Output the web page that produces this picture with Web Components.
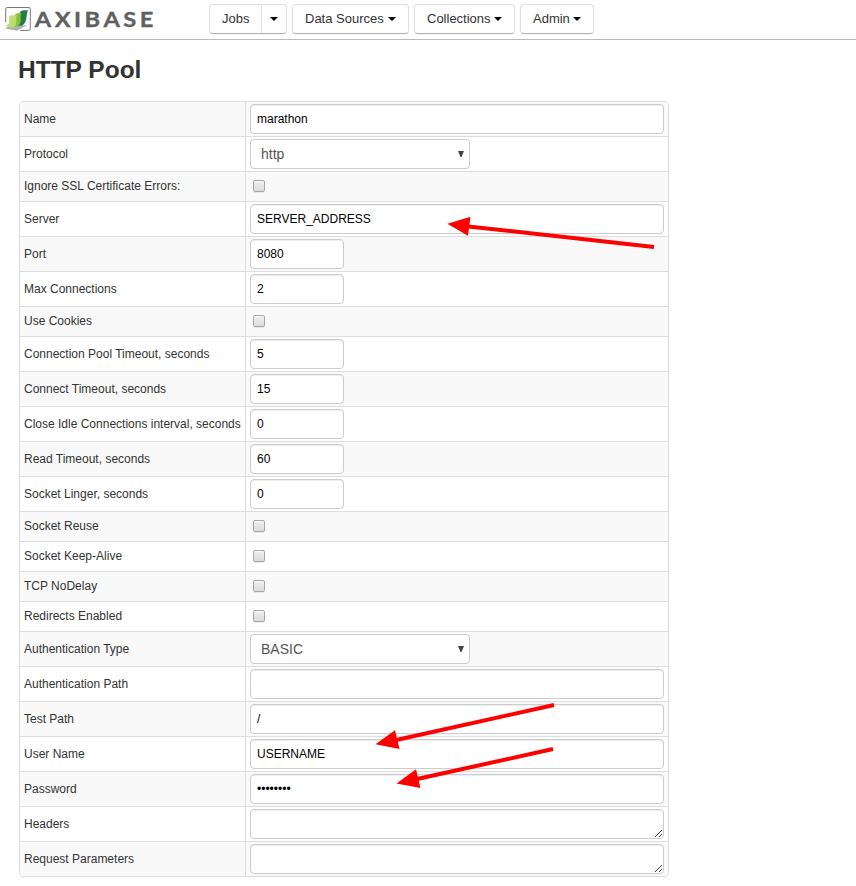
<!DOCTYPE html>
<html lang="en">
<head>
<meta charset="utf-8">
<title>HTTP Pool</title>
<style>
html,body{margin:0;padding:0;background:#fff}
body{font-family:"Liberation Sans",Arial,sans-serif;color:#333;font-size:12px;width:856px;height:886px;overflow:hidden}
</style>
</head>
<body>
<pool-page></pool-page>
<script>
function define(name, html, setup) {
  customElements.define(name, class extends HTMLElement {
    connectedCallback() {
      if (this.shadowRoot) return;
      const root = this.attachShadow({ mode: 'open' });
      const t = document.createElement('template');
      t.innerHTML = html;
      root.append(t.content.cloneNode(true));
      if (setup) setup(this, root);
    }
  });
}

define('brand-logo', `
<style>:host{display:block;width:160px;height:34px}svg{display:block}</style>
<svg width="160" height="34" viewBox="0 0 160 34">
  <path d="M20 30.400H28.500Q30.300 30.400 30.300 28.500V9Q30.300 7.500 28.800 7.500H7.200Q5.700 7.500 5.700 9V22" fill="none" stroke="#777" stroke-width="1"/>
  <path d="M5 28.500L9 26L27 25L17 30.800Z" fill="#b0b0b0"/>
  <path d="M14 25.500C20 22 17 15 21 11C23 9.500 26 10.500 28.300 10C25.500 14 28 20 23.500 24.500C21 26.500 17 26 14 25.500Z" fill="#1f7d45"/>
  <path d="M10 26C17 23 13 17 15.500 14C17.500 12.500 19 13.500 21.500 13C19 17 23 21.500 18.500 25.500C15 27.500 13 27 10 26Z" fill="#84c03c"/>
  <path d="M5.500 25.500C12 24 7.500 19 10 15.800C12.500 14.500 14.500 15.800 17 15.200C14.500 19 19 23 14 27C10 28 8 27 5.500 25.500Z" fill="#c1dc70"/>
  <text transform="translate(34.700 26.500) scale(1.110 1)" x="0" y="0" font-family="Lato" font-weight="700" font-size="21.300" fill="#606060" stroke="#606060" stroke-width=".35" textLength="107" lengthAdjust="spacing">AXIBASE</text>
</svg>`);

define('menu-button', `
<style>
:host{display:flex;box-sizing:border-box;height:30px;border:1px solid #e0e0e0;border-bottom-color:#b3b3b3;border-radius:4px;background:#fff;font-size:13px;line-height:28px;color:#333;box-shadow:0 1px 2px rgba(0,0,0,.05)}
.label{padding-left:12px;white-space:nowrap}
.caret{display:flex;align-items:center;margin-left:auto;padding-right:12px}
.caret i{display:block;border:4px solid transparent;border-top-color:#000;border-bottom:0}
:host([split]) .label{padding-right:12px;border-right:1px solid #e0e0e0}
:host([split]) .caret{margin-left:0;padding:0 0 0 8px}
</style>
<span class="label"><slot></slot></span><span class="caret"><i></i></span>`,
(el) => { el.style.width = el.getAttribute('width') + 'px'; });

define('nav-bar', `
<style>
:host{display:flex;box-sizing:border-box;height:40px;border-bottom:1px solid #bbb;align-items:flex-start}
brand-logo{margin-right:49px}
nav{display:flex;gap:5px;padding-top:4px}
</style>
<brand-logo></brand-logo>
<nav><menu-button split width="78">Jobs</menu-button><menu-button width="117">Data Sources</menu-button><menu-button width="101">Collections</menu-button><menu-button width="74">Admin</menu-button></nav>`);

define('text-field', `
<style>
:host{display:block;box-sizing:border-box;width:414px;height:30px;border:1px solid #ccc;border-radius:4px;background:#fff;box-shadow:inset 0 1px 1px rgba(0,0,0,.075);padding:0 6px;line-height:28px;color:#000;position:relative}
:host([small]){width:94px}
svg{display:none}
:host([area]) svg{display:block;position:absolute;right:-1px;bottom:0}
</style>
<slot></slot>
<svg width="10" height="10" viewBox="0 0 10 10" stroke="#444" stroke-width="1" shape-rendering="crispEdges"><path d="M1 8.500h1M2 7.500h1M3 6.500h1M4 5.500h1M5 4.500h1M6 3.500h1M7 2.500h1M5 8.500h1M6 7.500h1M7 6.500h1"/></svg>`);

define('select-field', `
<style>
:host{display:flex;justify-content:space-between;align-items:center;box-sizing:border-box;width:220px;height:30px;border:1px solid #ccc;border-radius:4px;background:#fff;padding:0 5px 0 10px;font-size:14px;line-height:28px;color:#555}
</style>
<span><slot></slot></span>
<svg width="6" height="6" viewBox="0 0 6 6"><path d="M0 0H6L3.500 6H2.500Z" fill="#444"/></svg>`);

define('check-box', `
<style>
:host{display:block;box-sizing:border-box;width:12px;height:12px;margin:0 0 1px 3px;border:1px solid #a6a6a6;border-radius:2px;background:linear-gradient(#eee,#dcdcdc);box-shadow:0 1px 0 rgba(0,0,0,.07),inset 0 1px 1px rgba(255,255,255,.8)}
</style>`);

define('form-row', `
<style>
:host{display:grid;grid-template-columns:226px 1fr;height:34px;border-bottom:1px solid #ddd}
:host(:nth-of-type(odd)){background:#f9f9f9}
:host(:last-child){border-bottom:0}
:host([short]){height:29px}
.name{border-right:1px solid #ddd;padding-left:4px;line-height:34px;white-space:nowrap}
:host([short]) .name{line-height:29px}
.value{display:flex;align-items:center;padding-left:4px}
</style>
<div class="name"></div><div class="value"><slot></slot></div>`,
(el, root) => { root.querySelector('.name').textContent = el.getAttribute('label'); });

define('form-table', `
<style>
:host{display:block;box-sizing:border-box;width:650px;border:1px solid #ddd;border-radius:4px;overflow:hidden}
</style>
<form-row label="Name"><text-field>marathon</text-field></form-row>
<form-row label="Protocol"><select-field>http</select-field></form-row>
<form-row short label="Ignore SSL Certificate Errors:"><check-box></check-box></form-row>
<form-row label="Server"><text-field>SERVER_ADDRESS</text-field></form-row>
<form-row label="Port"><text-field small>8080</text-field></form-row>
<form-row label="Max Connections"><text-field small>2</text-field></form-row>
<form-row short label="Use Cookies"><check-box></check-box></form-row>
<form-row label="Connection Pool Timeout, seconds"><text-field small>5</text-field></form-row>
<form-row label="Connect Timeout, seconds"><text-field small>15</text-field></form-row>
<form-row label="Close Idle Connections interval, seconds"><text-field small>0</text-field></form-row>
<form-row label="Read Timeout, seconds"><text-field small>60</text-field></form-row>
<form-row label="Socket Linger, seconds"><text-field small>0</text-field></form-row>
<form-row short label="Socket Reuse"><check-box></check-box></form-row>
<form-row short label="Socket Keep-Alive"><check-box></check-box></form-row>
<form-row short label="TCP NoDelay"><check-box></check-box></form-row>
<form-row short label="Redirects Enabled"><check-box></check-box></form-row>
<form-row label="Authentication Type"><select-field>BASIC</select-field></form-row>
<form-row label="Authentication Path"><text-field></text-field></form-row>
<form-row label="Test Path"><text-field>/</text-field></form-row>
<form-row label="User Name"><text-field>USERNAME</text-field></form-row>
<form-row label="Password"><text-field>••••••••</text-field></form-row>
<form-row label="Headers"><text-field area></text-field></form-row>
<form-row label="Request Parameters"><text-field area></text-field></form-row>`.replace(/>\n</g, '><'));

define('arrow-overlay', `
<style>:host{display:block;position:absolute;inset:0;pointer-events:none}svg{display:block}</style>
<svg width="856" height="886" viewBox="0 0 856 886" fill="#f00" stroke="#f00" stroke-width="4">
  <path d="M654 247L466 226.200"/><path stroke="none" d="M447.300 223.700L470.500 216.700L468 235.700Z"/>
  <path d="M554 705L394 740.500"/><path stroke="none" d="M375.500 744.200L395 730.300L399.500 749Z"/>
  <path d="M553 749L415 779.500"/><path stroke="none" d="M396.500 783.500L416 769.300L420.500 788Z"/>
</svg>`);

define('pool-page', `
<style>
:host{display:block;position:relative;width:856px;height:886px}
main{padding:0 19px}
h1{margin:0 0 0 -1px;font-size:24.5px;line-height:40px;height:51px;padding-top:10px;box-sizing:content-box}
</style>
<nav-bar></nav-bar>
<main><h1>HTTP Pool</h1><form-table></form-table></main>
<arrow-overlay></arrow-overlay>`);
</script>
</body>
</html>
